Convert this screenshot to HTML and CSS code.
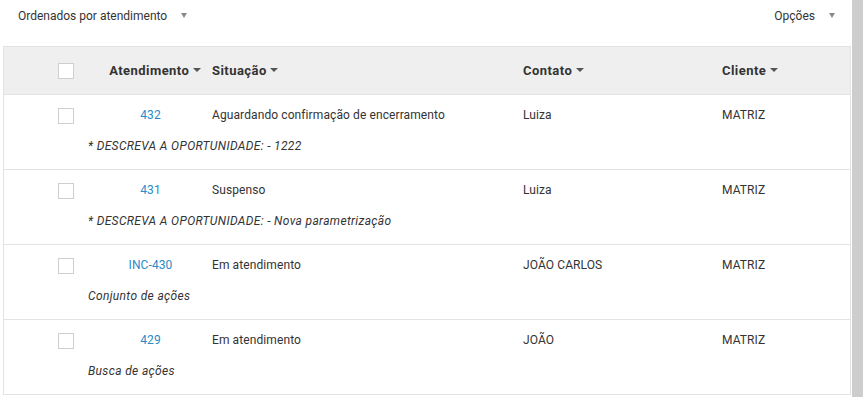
FILE: index.html
```html
<!DOCTYPE html>
<html lang="pt-BR">
<head>
<meta charset="utf-8">
<link rel="stylesheet" href="styles.css">
</head>
<body>
<div class="page">
  <div class="content">
    <div class="toolbar">
      <div class="sort">Ordenados por atendimento <span class="caret"></span></div>
      <div class="options">Opções <span class="caret"></span></div>
    </div>
    <div class="table">
      <div class="row head">
        <div class="c-check"><span class="box"></span></div>
        <div class="c-num">Atendimento <span class="sarrow"></span></div>
        <div class="c-sit">Situação <span class="sarrow"></span></div>
        <div class="c-con">Contato <span class="sarrow"></span></div>
        <div class="c-cli">Cliente <span class="sarrow"></span></div>
      </div>
      <div class="row item">
        <div class="c-check"><span class="box"></span></div>
        <div class="c-num"><a>432</a></div>
        <div class="c-sit">Aguardando confirmação de encerramento</div>
        <div class="c-con">Luiza</div>
        <div class="c-cli">MATRIZ</div>
        <div class="desc">* DESCREVA A OPORTUNIDADE: - 1222</div>
      </div>
      <div class="row item">
        <div class="c-check"><span class="box"></span></div>
        <div class="c-num"><a>431</a></div>
        <div class="c-sit">Suspenso</div>
        <div class="c-con">Luiza</div>
        <div class="c-cli">MATRIZ</div>
        <div class="desc">* DESCREVA A OPORTUNIDADE: - Nova parametrização</div>
      </div>
      <div class="row item">
        <div class="c-check"><span class="box"></span></div>
        <div class="c-num"><a>INC-430</a></div>
        <div class="c-sit">Em atendimento</div>
        <div class="c-con">JOÃO CARLOS</div>
        <div class="c-cli">MATRIZ</div>
        <div class="desc">Conjunto de ações</div>
      </div>
      <div class="row item">
        <div class="c-check"><span class="box"></span></div>
        <div class="c-num"><a>429</a></div>
        <div class="c-sit">Em atendimento</div>
        <div class="c-con">JOÃO</div>
        <div class="c-cli">MATRIZ</div>
        <div class="desc">Busca de ações</div>
      </div>
    </div>
  </div>
  <div class="scrollbar"></div>
</div>
</body>
</html>
```

FILE: styles.css
```css
html, body {
  margin: 0;
  padding: 0;
  background: #fff;
}
body {
  font-family: Roboto, "Liberation Sans", sans-serif;
  font-size: 12px;
  color: #333;
  overflow: hidden;
}
.page {
  display: flex;
  width: 863px;
  height: 397px;
}
.content {
  width: 848px;
  margin-left: 3px;
}
.scrollbar {
  width: 11px;
  margin-left: 1px;
  background: #cdcdcd;
}
.toolbar {
  height: 46px;
  display: flex;
  justify-content: space-between;
  font-size: 12px;
  color: #333;
}
.sort {
  padding: 9px 0 0 15px;
}
.options {
  padding: 9px 16px 0 0;
}
.caret {
  display: inline-block;
  width: 0;
  height: 0;
  border-left: 3px solid transparent;
  border-right: 3px solid transparent;
  border-top: 5px solid #8a8a8a;
  margin-left: 11px;
  vertical-align: 2px;
}
.table {
  border: 1px solid #e3e3e3;
  border-bottom: none;
}
.row {
  display: grid;
  grid-template-columns: 96px 101px 322px 199px 1fr;
  border-bottom: 1px solid #e3e3e3;
}
.head {
  height: 47px;
  background: #efefef;
  align-items: center;
  font-weight: bold;
  font-size: 13px;
  letter-spacing: 0.45px;
  color: #333;
}
.item {
  height: 74px;
  grid-template-rows: 40px 1fr;
  letter-spacing: 0.1px;
}
.c-check {
  padding-left: 54px;
  display: flex;
  align-items: center;
}
.box {
  display: block;
  width: 14px;
  height: 14px;
  border: 1px solid #cfcfcf;
  background: #fff;
}
.c-num {
  text-align: center;
}
.head .c-num {
  text-align: right;
}
.c-sit {
  padding-left: 11px;
}
.item > div:not(.desc) {
  padding-top: 13px;
}
.item .c-check {
  align-self: start;
  padding-top: 12px;
}
a {
  color: #2a8bc6;
}
.desc {
  grid-column: 1 / -1;
  padding-left: 84px;
  font-style: italic;
  letter-spacing: 0.35px;
  padding-top: 4px;
}
.sarrow {
  display: inline-block;
  width: 0;
  height: 0;
  border-left: 4px solid transparent;
  border-right: 4px solid transparent;
  border-top: 4px solid #555;
  vertical-align: 3px;
  margin-left: 0;
}
```
